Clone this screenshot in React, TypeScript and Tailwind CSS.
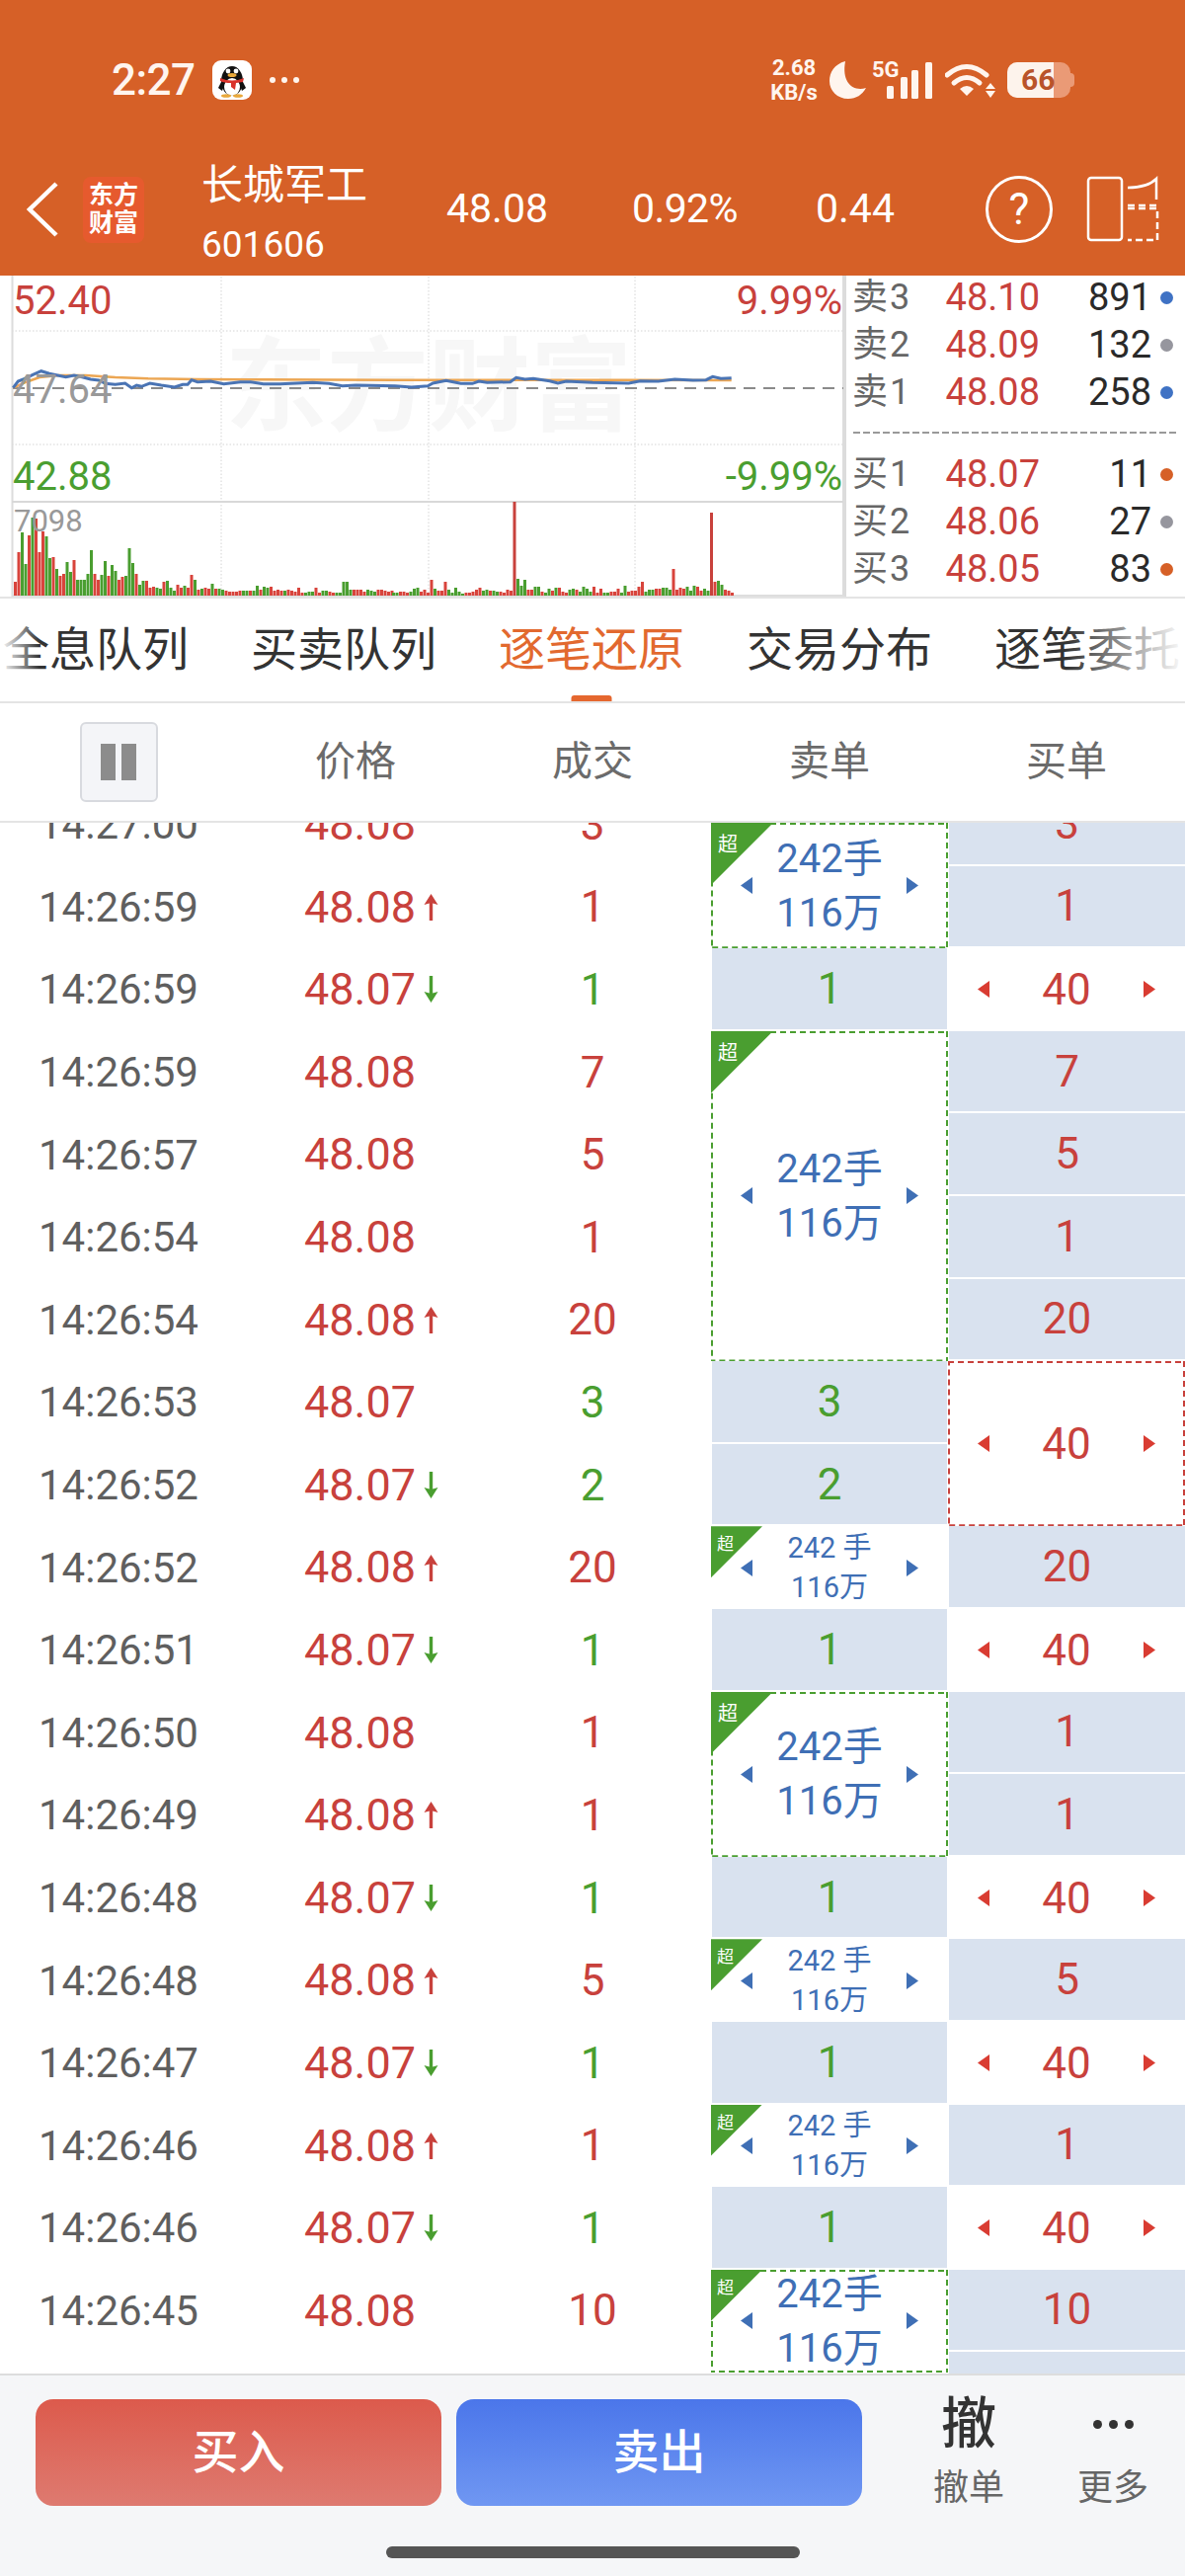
const RED = "text-[#c8413c]";
const GREEN = "text-[#4a9e30]";

type Tick = { time: string; price: string; arrow?: "up" | "down"; vol: number };

const ticks: Tick[] = [
  { time: "14:27:00", price: "48.08", vol: 3 },
  { time: "14:26:59", price: "48.08", arrow: "up", vol: 1 },
  { time: "14:26:59", price: "48.07", arrow: "down", vol: 1 },
  { time: "14:26:59", price: "48.08", vol: 7 },
  { time: "14:26:57", price: "48.08", vol: 5 },
  { time: "14:26:54", price: "48.08", vol: 1 },
  { time: "14:26:54", price: "48.08", arrow: "up", vol: 20 },
  { time: "14:26:53", price: "48.07", vol: 3 },
  { time: "14:26:52", price: "48.07", arrow: "down", vol: 2 },
  { time: "14:26:52", price: "48.08", arrow: "up", vol: 20 },
  { time: "14:26:51", price: "48.07", arrow: "down", vol: 1 },
  { time: "14:26:50", price: "48.08", vol: 1 },
  { time: "14:26:49", price: "48.08", arrow: "up", vol: 1 },
  { time: "14:26:48", price: "48.07", arrow: "down", vol: 1 },
  { time: "14:26:48", price: "48.08", arrow: "up", vol: 5 },
  { time: "14:26:47", price: "48.07", arrow: "down", vol: 1 },
  { time: "14:26:46", price: "48.08", arrow: "up", vol: 1 },
  { time: "14:26:46", price: "48.07", arrow: "down", vol: 1 },
  { time: "14:26:45", price: "48.08", vol: 10 },
  { time: "", price: "", vol: 0 },
];

// bar heights in px, negative means a green bar
const barsLeft = [
  14, 44, -64, -32, 61, -79, 78, 44, 65, -60, -38, 39, -27, 20, 22, -34, -24, 36, -16, -16, -16, -22, -46, 22, 16,
  -21, -35, 20, -31, -25, 16, 19, -20, -48, -33, 22, -11, -15, 15, 8, 9, -8, -7, 14, -15, -8, -5, 11, 8, -10, 8, 21,
  -16, 6, -7, 8, 7, -12, 7, -7, -6, 5, 4, 4, 4, 5, -5, -5, 5, -5, -10, 6, -9, -8, 9, 5, 6, 5, -5, 6, 5, 4, 8, 3, -3,
  -4, -4, 8, 3, -5, -5, 4, 3, -3, -3, -14, -14, -6, 6, 6, 6, 4, -6, -5, -4, 6, 6, 5, 4, 5,
];
const barsRight = [
  -3, -3, 4, 4, 3, -4, -7, -8, 4, 6, 3, 16, -7, 5, 5, 14, -6, -3, -8, -4, -2, 3, 3, 4, 6, 8, -5, -6, 5, -5, -4, 4, 3,
  6, 5, 95, -17, -10, -16, 6, 6, -9, -9, 4, -3, -7, 5, -8, 8, 4, 3, -6, -7, 6, -4, -9, -7, -4, 9, 3, 7, -3, -3, 4, 4,
  7, -3, -10, 4, 5, 5, 9, 14, -4, -6, -6, 7, 7, -8, -8, -6, 27, 6, 8, 7, -9, -5, -10, 9, 5, -7, -5, 84, 14, -15, -11,
  6, 5, 3,
];

// price curves, read off in 3x crop coordinates
const blueA = [
  [40, 98], [55, 78], [75, 70], [100, 58], [125, 47], [150, 55], [175, 60], [200, 65], [225, 60], [250, 65], [275, 72],
  [300, 75], [320, 85], [350, 88], [380, 84], [400, 98], [415, 90], [430, 94], [455, 84], [490, 90], [530, 96],
  [555, 88], [570, 88], [582, 74], [600, 80], [640, 78], [680, 86], [730, 80], [760, 80], [800, 86], [850, 86],
  [900, 84], [950, 82], [1000, 85], [1040, 92], [1080, 90], [1200, 92],
];
const blueB = [
  [0, 92], [50, 96], [100, 92], [115, 84], [155, 76], [200, 85], [235, 85], [255, 78], [280, 82], [350, 80], [368, 67],
  [395, 72], [420, 70], [470, 77], [495, 84], [520, 78], [600, 82], [710, 84], [745, 77], [800, 78], [850, 72],
  [905, 75], [945, 74], [965, 64], [990, 70], [1022, 68],
];
const avgLine = [
  [40, 98], [80, 80], [120, 66], [180, 60], [260, 60], [350, 66], [450, 70], [600, 72], [800, 73], [1200, 74],
  [1900, 74], [2222, 75],
];

const toPoints = (pts: number[][]) => pts.map(([x, y]) => `${(x / 3).toFixed(1)},${(360 + y / 3).toFixed(1)}`).join(" ");
const bluePoints = toPoints(blueA) + " " + toPoints(blueB.map(([x, y]) => [x + 1200, y]));

function Caret({ side, color }: { side: "left" | "right"; color: string }) {
  return (
    <svg width="12" height="17" viewBox="0 0 12 17" className={color}>
      <polygon points={side === "left" ? "12,0 12,17 0,8.5" : "0,0 0,17 12,8.5"} fill="currentColor" />
    </svg>
  );
}

function TickArrow({ dir }: { dir: "up" | "down" }) {
  return (
    <span className="flex w-[30px] justify-center">
      <svg width="17" height="29" viewBox="0 0 17 29" className={dir === "up" ? RED : GREEN}>
        {dir === "up" ? (
          <path d="M8.5 1 L15.5 12 L10.2 10.5 L10.2 28 L6.8 28 L6.8 10.5 L1.5 12 Z" fill="currentColor" />
        ) : (
          <path d="M8.5 28 L15.5 17 L10.2 18.5 L10.2 1 L6.8 1 L6.8 18.5 L1.5 17 Z" fill="currentColor" />
        )}
      </svg>
    </span>
  );
}

// the stroke sits on the edge, the svg clips its outer half, so 4 draws as 2px
function DashedFrame({ color }: { color: string }) {
  return (
    <svg className={`pointer-events-none absolute inset-0 h-full w-full ${color}`}>
      <rect width="100%" height="100%" fill="none" stroke="currentColor" strokeWidth="4" strokeDasharray="6 4" />
    </svg>
  );
}

function Plain({ value, color, side }: { value: number | string; color: string; side: "sell" | "buy" }) {
  return (
    <div
      className={`flex h-full items-center justify-center border-b-2 border-white bg-[#d9e2ef] text-[44px] ${color} ${
        side === "sell" ? "mx-px" : "ml-px"
      }`}
    >
      {value}
    </div>
  );
}

function BigOrder({ small, dashed, tri }: { small?: boolean; dashed?: boolean; tri: "sm" | "lg" }) {
  return (
    <div className="relative flex h-full items-center justify-between bg-white px-[30px]">
      {dashed && <DashedFrame color="text-[#4a9e30]" />}
      <div
        className={`absolute top-0 left-0 bg-[#4a9e30] text-white [clip-path:polygon(0_0,100%_0,0_100%)] ${
          tri === "lg"
            ? "h-[63px] w-[63px] pt-[10px] pl-[7px] text-[20px] leading-[24px]"
            : "h-[52px] w-[52px] pt-[8px] pl-[6px] text-[17px] leading-[20px]"
        }`}
      >
        超
      </div>
      <Caret side="left" color="text-[#3f6fb5]" />
      <div className={`text-center text-[#3f6fb5] ${small ? "text-[29px] leading-[40px]" : "text-[40px] leading-[55px]"}`}>
        <div>{small ? "242 手" : "242手"}</div>
        <div>116万</div>
      </div>
      <Caret side="right" color="text-[#3f6fb5]" />
    </div>
  );
}

function BuyForty({ dashed }: { dashed?: boolean }) {
  return (
    <div className={`relative flex h-full items-center justify-between bg-white px-[30px] text-[44px] ${RED}`}>
      {dashed && <DashedFrame color="text-[#c8413c]" />}
      <Caret side="left" color="text-[#d93c32]" />
      <span>40</span>
      <Caret side="right" color="text-[#d93c32]" />
    </div>
  );
}

function StatusBar() {
  return (
    <div className="flex h-[162px] items-center text-[#fff5ee]">
      <span className="ml-[113px] w-[84px] text-[44px] leading-none font-medium tracking-[-0.5px]">2:27</span>
      <svg width="40" height="40" viewBox="0 0 40 40" className="ml-[18px]">
        <rect width="40" height="40" rx="9" fill="#fff" />
        <ellipse cx="20" cy="21" rx="11" ry="15" fill="#111" />
        <ellipse cx="20" cy="27" rx="8" ry="9" fill="#fff" />
        <path d="M6 28 L10 20 L13 22 L10 31 Z M34 28 L30 20 L27 22 L30 31 Z" fill="#111" />
        <circle cx="16" cy="11" r="2.4" fill="#fff" />
        <circle cx="24" cy="11" r="2.4" fill="#fff" />
        <ellipse cx="20" cy="15" rx="4.5" ry="2" fill="#e9a83a" />
        <path d="M8 18 Q20 23 32 18 L31 22 L24 23 L23 30 L19 27 L19 23 Q12 23 8 21 Z" fill="#d9322a" />
        <ellipse cx="14" cy="36" rx="5" ry="1.8" fill="#e9a83a" />
        <ellipse cx="26" cy="36" rx="5" ry="1.8" fill="#e9a83a" />
      </svg>
      <div className="ml-[18px] flex gap-[6px]">
        <i className="h-[6px] w-[6px] rounded-full bg-[#fff5ee]" />
        <i className="h-[6px] w-[6px] rounded-full bg-[#fff5ee]" />
        <i className="h-[6px] w-[6px] rounded-full bg-[#fff5ee]" />
      </div>

      <div className="mr-[112px] ml-auto flex items-center">
        <div className="w-[48px] text-center text-[22px] leading-[25px] font-bold whitespace-nowrap">
          <div>2.68</div>
          <div>KB/s</div>
        </div>
        <svg width="37" height="38" viewBox="0 0 37 38" className="ml-[12px]">
          <path d="M16 0 C5 3 0 11 0 20 C0 30 8 38 19 38 C27 38 33 34 37 27 C24 31 12 22 16 0 Z" fill="currentColor" />
        </svg>
        <div className="relative ml-[6px] h-[38px] w-[62px]">
          <span className="absolute -top-[4px] left-0 text-[22px] leading-[26px] font-bold">5G</span>
          <svg width="62" height="38" viewBox="0 0 62 38">
            <rect x="15" y="25" width="7" height="13" rx="1.5" fill="currentColor" />
            <rect x="29" y="16" width="7" height="22" rx="1.5" fill="currentColor" />
            <rect x="40" y="9" width="7" height="29" rx="1.5" fill="currentColor" />
            <rect x="54" y="1" width="7" height="37" rx="1.5" fill="currentColor" />
          </svg>
        </div>
        <svg width="51" height="36" viewBox="0 0 51 36" className="ml-[12px]">
          <path d="M2 13 Q22 -4 42 13" stroke="currentColor" strokeWidth="5" fill="none" strokeLinecap="round" />
          <path d="M9 21 Q22 10 35 21" stroke="currentColor" strokeWidth="5" fill="none" strokeLinecap="round" />
          <path d="M15 27 Q22 21 29 27 L22 34 Z" fill="currentColor" />
          <path d="M41 27 L46 21 L51 27 Z M41 29 L51 29 L46 36 Z" fill="currentColor" />
        </svg>
        <div className="ml-[12px] flex items-center">
          <div className="relative h-[36px] w-[64px] overflow-hidden rounded-[10px] bg-[#ea9a76]">
            <div className="h-full w-[47px] bg-[#fdf3ec]" />
            <span className="absolute top-0 left-[14px] text-[30px] leading-[36px] font-bold text-[#b9532a]">66</span>
          </div>
          <div className="h-[14px] w-[4px] rounded-r-full bg-[#ea9a76]" />
        </div>
      </div>
    </div>
  );
}

function NavBar() {
  return (
    <div className="flex h-[100px] items-center text-white">
      <svg width="32" height="56" viewBox="0 0 32 56" className="ml-[27px]">
        <path d="M30 2 L3 28 L30 54" stroke="currentColor" strokeWidth="4.5" fill="none" />
      </svg>
      <div className="ml-[25px] flex h-[67px] w-[62px] flex-col items-center justify-center rounded-[8px] bg-[#e65a2e] text-[25px] leading-[28px] font-bold">
        <div>东方</div>
        <div>财富</div>
      </div>
      <div className="ml-[58px] w-[248px] pt-[12px]">
        <div className="text-[42px] leading-[60px]">长城军工</div>
        <div className="text-[37px] leading-[60px]">601606</div>
      </div>
      <span className="w-[188px] text-[41px]">48.08</span>
      <span className="w-[186px] text-[41px] tracking-[-0.6px]">0.92%</span>
      <span className="w-[172px] text-[41px]">0.44</span>
      <div className="flex h-[68px] w-[68px] items-center justify-center rounded-full border-[3px] border-white text-[44px]">?</div>
      <svg width="74" height="68" viewBox="0 0 74 68" className="ml-[34px]" stroke="currentColor" strokeWidth="2.5" fill="none">
        <rect x="2" y="2" width="34" height="63" rx="3" />
        <path d="M42 12 Q62 12 71 3 L71 24" />
        <path d="M42 30 L72 30" strokeDasharray="7 4" />
        <path d="M42 33 L72 33 L72 65 L42 65" strokeDasharray="7 4" />
      </svg>
    </div>
  );
}

function Chart() {
  return (
    <div className="relative h-[325px] w-[855px] overflow-hidden">
      <div className="absolute top-[55px] left-[228px] text-[103px] leading-[118px] font-bold whitespace-nowrap text-[#f7f7f7]">
        东方财富
      </div>
      <svg width="855" height="325" viewBox="0 279 855 325" className="absolute inset-0">
        <g stroke="#d4d4d4" strokeWidth="1" strokeDasharray="1.5 2">
          <path d="M12 335 H854 M12 450 H854" />
          <path d="M224 280 V603 M434 280 V603 M643 280 V603" />
        </g>
        <path d="M12.5 279 V604 M854 279 V604" stroke="#dcdcdc" strokeWidth="2" />
        <path d="M12 508 H854" stroke="#d8d8d8" strokeWidth="2" />
        <path d="M12 603 H854" stroke="#dedede" strokeWidth="2" />
        <path d="M13 393 H854" stroke="#8a8a8a" strokeWidth="2" strokeDasharray="12 8" />
        <polyline points={toPoints(avgLine)} fill="none" stroke="#eca653" strokeWidth="2.5" />
        <polyline points={bluePoints} fill="none" stroke="#4a74b4" strokeWidth="3" />
        {barsLeft.map((h, i) => (
          <rect key={i} x={14 + i * 3.5} y={603 - Math.abs(h)} width="3" height={Math.abs(h)} fill={h < 0 ? "#4a9e30" : "#d8443c"} />
        ))}
        {barsRight.map((h, i) => (
          <rect key={i} x={397 + i * 3.5} y={603 - Math.abs(h)} width="3" height={Math.abs(h)} fill={h < 0 ? "#4a9e30" : h > 50 ? "#c8413c" : "#d8443c"} />
        ))}
      </svg>
      <span className={`absolute top-[6px] left-[13px] text-[40px] leading-[40px] ${RED}`}>52.40</span>
      <span className={`absolute top-[6px] right-[2px] text-[40px] leading-[40px] ${RED}`}>9.99%</span>
      <span className="absolute top-[96px] left-[13px] text-[40px] leading-[40px] text-[#999999]">47.64</span>
      <span className={`absolute top-[184px] left-[13px] text-[40px] leading-[40px] ${GREEN}`}>42.88</span>
      <span className={`absolute top-[184px] right-[2px] text-[40px] leading-[40px] ${GREEN}`}>-9.99%</span>
      <span className="absolute top-[231px] left-[14px] text-[31px] leading-[36px] text-[#999999]">7098</span>
    </div>
  );
}

function BookRow({ label, price, vol, dot }: { label: string; price: string; vol: number; dot: string }) {
  return (
    <div className="flex h-[42px] items-center pl-[6px]">
      <span className="w-[71px] text-[36px] tracking-[2px] text-[#666666]">{label}</span>
      <span className={`w-[119px] text-right text-[38px] ${RED}`}>{price}</span>
      <span className="w-[113px] text-right text-[38px] text-[#2a2a2a]">{vol}</span>
      <i className={`ml-[9px] h-[13px] w-[13px] rounded-full ${dot}`} />
    </div>
  );
}

function OrderBook() {
  return (
    <div className="flex-1 border-l-2 border-[#dcdcdc] pt-[1px]">
      <div className="flex flex-col gap-[6px]">
        <BookRow label="卖3" price="48.10" vol={891} dot="bg-[#3f72c4]" />
        <BookRow label="卖2" price="48.09" vol={132} dot="bg-[#96969e]" />
        <BookRow label="卖1" price="48.08" vol={258} dot="bg-[#3f72c4]" />
      </div>
      <div className="mt-[19px] mr-[8px] ml-[7px] h-[2px] bg-[repeating-linear-gradient(90deg,#999999_0_7px,transparent_7px_10px)]" />
      <div className="mt-[20px] flex flex-col gap-[6px]">
        <BookRow label="买1" price="48.07" vol={11} dot="bg-[#d66027]" />
        <BookRow label="买2" price="48.06" vol={27} dot="bg-[#96969e]" />
        <BookRow label="买3" price="48.05" vol={83} dot="bg-[#d66027]" />
      </div>
    </div>
  );
}

function Tabs() {
  const tabs = ["全息队列", "买卖队列", "逐笔还原", "交易分布", "逐笔委托"];
  return (
    <div className="relative flex h-[106px] gap-[63px] overflow-hidden border-b-2 border-[#e4e4e4] pl-[3px]">
      {tabs.map((tab, i) => (
        <div key={tab} className={`relative flex h-full shrink-0 items-center text-[47px] ${i === 2 ? "text-[#e2692f]" : "text-[#333333]"}`}>
          {tab}
          {i === 2 && <i className="absolute bottom-0 left-1/2 h-[6px] w-[41px] -translate-x-1/2 rounded-t-[3px] bg-[#e5672f]" />}
        </div>
      ))}
      <div className="absolute inset-y-0 left-0 w-[40px] bg-gradient-to-r from-white to-transparent" />
      <div className="absolute inset-y-0 right-0 w-[120px] bg-gradient-to-l from-white to-transparent" />
    </div>
  );
}

function ColumnHeader() {
  return (
    <div className="grid h-[121px] grid-cols-5 items-center border-b-2 border-[#e4e4e4] text-center text-[41px] text-[#6b6b6b]">
      <div className="flex justify-center">
        <div className="flex h-[81px] w-[79px] items-center justify-center gap-[6px] rounded-[6px] border-2 border-[#d8dadf] bg-[#f4f5f8]">
          <i className="h-[37px] w-[15px] bg-[#8c8c8c]" />
          <i className="h-[37px] w-[15px] bg-[#8c8c8c]" />
        </div>
      </div>
      <div>价格</div>
      <div>成交</div>
      <div>卖单</div>
      <div>买单</div>
    </div>
  );
}

function TickTable() {
  return (
    <div className="min-h-0 flex-1 overflow-hidden">
      <div className="-mt-[40px] grid grid-cols-5 auto-rows-[83.6px] text-[42px]">
        {ticks.map((t, i) => (
          <div key={i} className="contents">
            <div className="col-start-1 flex items-center justify-center text-[#5f5f5f]" style={{ gridRowStart: i + 1 }}>
              {t.time}
            </div>
            <div className={`col-start-2 flex items-center justify-end pr-[29px] text-[45px] ${RED}`} style={{ gridRowStart: i + 1 }}>
              {t.price}
              {t.arrow ? <TickArrow dir={t.arrow} /> : <span className="w-[30px]" />}
            </div>
            <div
              className={`col-start-3 flex items-center justify-center text-[44px] ${t.price === "48.07" ? GREEN : RED}`}
              style={{ gridRowStart: i + 1 }}
            >
              {t.vol || ""}
            </div>
          </div>
        ))}

        {/* sell side */}
        <div className="col-start-4 row-span-2 row-start-1 pt-[40px]"><BigOrder dashed tri="lg" /></div>
        <div className="col-start-4 row-start-3"><Plain side="sell" value={1} color={GREEN} /></div>
        <div className="col-start-4 row-span-4 row-start-4"><BigOrder dashed tri="lg" /></div>
        <div className="col-start-4 row-start-8"><Plain side="sell" value={3} color={GREEN} /></div>
        <div className="col-start-4 row-start-9"><Plain side="sell" value={2} color={GREEN} /></div>
        <div className="col-start-4 row-start-10"><BigOrder small tri="sm" /></div>
        <div className="col-start-4 row-start-11"><Plain side="sell" value={1} color={GREEN} /></div>
        <div className="col-start-4 row-span-2 row-start-12"><BigOrder dashed tri="lg" /></div>
        <div className="col-start-4 row-start-14"><Plain side="sell" value={1} color={GREEN} /></div>
        <div className="col-start-4 row-start-15"><BigOrder small tri="sm" /></div>
        <div className="col-start-4 row-start-16"><Plain side="sell" value={1} color={GREEN} /></div>
        <div className="col-start-4 row-start-17"><BigOrder small tri="sm" /></div>
        <div className="col-start-4 row-start-18"><Plain side="sell" value={1} color={GREEN} /></div>
        <div className="col-start-4 row-span-2 row-start-19 h-[104px]"><BigOrder dashed tri="sm" /></div>

        {/* buy side */}
        <div className="col-start-5 row-start-1"><Plain side="buy" value={3} color={RED} /></div>
        <div className="col-start-5 row-start-2"><Plain side="buy" value={1} color={RED} /></div>
        <div className="col-start-5 row-start-3"><BuyForty /></div>
        <div className="col-start-5 row-start-4"><Plain side="buy" value={7} color={RED} /></div>
        <div className="col-start-5 row-start-5"><Plain side="buy" value={5} color={RED} /></div>
        <div className="col-start-5 row-start-6"><Plain side="buy" value={1} color={RED} /></div>
        <div className="col-start-5 row-start-7"><Plain side="buy" value={20} color={RED} /></div>
        <div className="col-start-5 row-span-2 row-start-8"><BuyForty dashed /></div>
        <div className="col-start-5 row-start-10"><Plain side="buy" value={20} color={RED} /></div>
        <div className="col-start-5 row-start-11"><BuyForty /></div>
        <div className="col-start-5 row-start-12"><Plain side="buy" value={1} color={RED} /></div>
        <div className="col-start-5 row-start-13"><Plain side="buy" value={1} color={RED} /></div>
        <div className="col-start-5 row-start-14"><BuyForty /></div>
        <div className="col-start-5 row-start-15"><Plain side="buy" value={5} color={RED} /></div>
        <div className="col-start-5 row-start-16"><BuyForty /></div>
        <div className="col-start-5 row-start-17"><Plain side="buy" value={1} color={RED} /></div>
        <div className="col-start-5 row-start-18"><BuyForty /></div>
        <div className="col-start-5 row-start-19"><Plain side="buy" value={10} color={RED} /></div>
        <div className="col-start-5 row-start-20"><Plain side="buy" value="" color={RED} /></div>
      </div>
    </div>
  );
}

function BottomBar() {
  return (
    <div className="border-t-2 border-[#dddddd] bg-[#f5f6f8]">
      <div className="flex h-[133px] items-start pt-[21px]">
        <button className="mt-[3px] ml-[36px] h-[108px] w-[411px] rounded-[18px] bg-gradient-to-b from-[#dc5a4c] to-[#de7a70] text-[47px] font-medium text-white">
          买入
        </button>
        <button className="mt-[3px] ml-[15px] h-[108px] w-[411px] rounded-[18px] bg-gradient-to-b from-[#4b76ea] to-[#7097f2] text-[47px] font-medium text-white">
          卖出
        </button>
        <div className="ml-[58px] flex w-[100px] flex-col items-center">
          <div className="flex h-[56px] items-center text-[56px] font-medium text-[#333333]">撤</div>
          <div className="mt-[17px] text-[36px] leading-[40px] text-[#666666]">撤单</div>
        </div>
        <div className="ml-[46px] flex w-[100px] flex-col items-center">
          <div className="flex h-[56px] items-center gap-[7px]">
            <i className="h-[9px] w-[9px] rounded-full bg-[#333333]" />
            <i className="h-[9px] w-[9px] rounded-full bg-[#333333]" />
            <i className="h-[9px] w-[9px] rounded-full bg-[#333333]" />
          </div>
          <div className="mt-[17px] text-[36px] leading-[40px] text-[#666666]">更多</div>
        </div>
      </div>
      <div className="mx-auto mt-[40px] mb-[18px] h-[12px] w-[419px] rounded-full bg-[#555555]" />
    </div>
  );
}

export default function App() {
  return (
    <main className="flex h-[2608px] w-[1200px] flex-col overflow-hidden bg-white font-['Roboto','Noto_Sans_CJK_SC',sans-serif]">
      <header className="h-[279px] shrink-0 bg-[#d66027]">
        <StatusBar />
        <NavBar />
      </header>
      <section className="flex h-[327px] shrink-0 border-b-2 border-[#e4e4e4]">
        <Chart />
        <OrderBook />
      </section>
      <Tabs />
      <ColumnHeader />
      <TickTable />
      <BottomBar />
    </main>
  );
}
